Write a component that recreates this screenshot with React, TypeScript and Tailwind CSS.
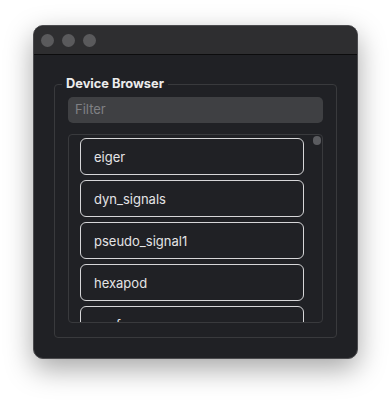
import React from 'react';

const devices = ['eiger', 'dyn_signals', 'pseudo_signal1', 'hexapod', 'eyefoc'];

const App: React.FC = () => {
  return (
    <div
      className="w-[392px] h-[401px] bg-white pt-[25px] pl-[33px]"
      style={{ fontFamily: 'Inter, "Noto Sans", sans-serif' }}
    >
      <div className="w-[325px] h-[334px] flex flex-col rounded-[10px] overflow-hidden bg-[#202125] border border-[#4b4b4e] shadow-[0_10px_28px_rgba(0,0,0,0.35)]">
        {/* title bar */}
        <div className="h-[29px] shrink-0 flex items-center gap-[8px] pl-[7px] bg-[#2e2e30] border-b border-[#0c0c0d]">
          <span className="w-[13px] h-[13px] rounded-full bg-[#5a5a5c]" />
          <span className="w-[13px] h-[13px] rounded-full bg-[#5a5a5c]" />
          <span className="w-[13px] h-[13px] rounded-full bg-[#5a5a5c]" />
        </div>

        <div className="px-[20px] pt-[21px]">
          <fieldset className="flex flex-col border border-[#393a3d] rounded-[4px] px-[13px] pb-[14px]">
            <legend className="ml-[-6px] px-[4px] text-[12.8px] leading-[16px] font-bold text-[#ececec]">
              Device Browser
            </legend>
            <div className="mt-[5px] h-[26px] shrink-0 rounded-[5px] bg-[#3f4043] flex items-center pl-[7px] text-[13px] text-[#7f8084]">
              Filter
            </div>
            <div className="mt-[11px] h-[189px] relative overflow-hidden border border-[#393a3d] rounded-[4px] pt-[3px] pl-[11px] pr-[18px]">
              <div className="flex flex-col gap-[5px]">
                {devices.map((d) => (
                  <div
                    key={d}
                    className="h-[37px] shrink-0 flex items-center pl-[13px] pt-[2px] rounded-[6px] border border-[#d6d6d8] text-[13px] text-[#e4e4e6]"
                  >
                    {d}
                  </div>
                ))}
              </div>
              <div className="absolute top-[1px] right-[1px] w-[8px] h-[9px] rounded-full bg-[#5b5c60]" />
            </div>
          </fieldset>
        </div>
      </div>
    </div>
  );
};

export default App;
